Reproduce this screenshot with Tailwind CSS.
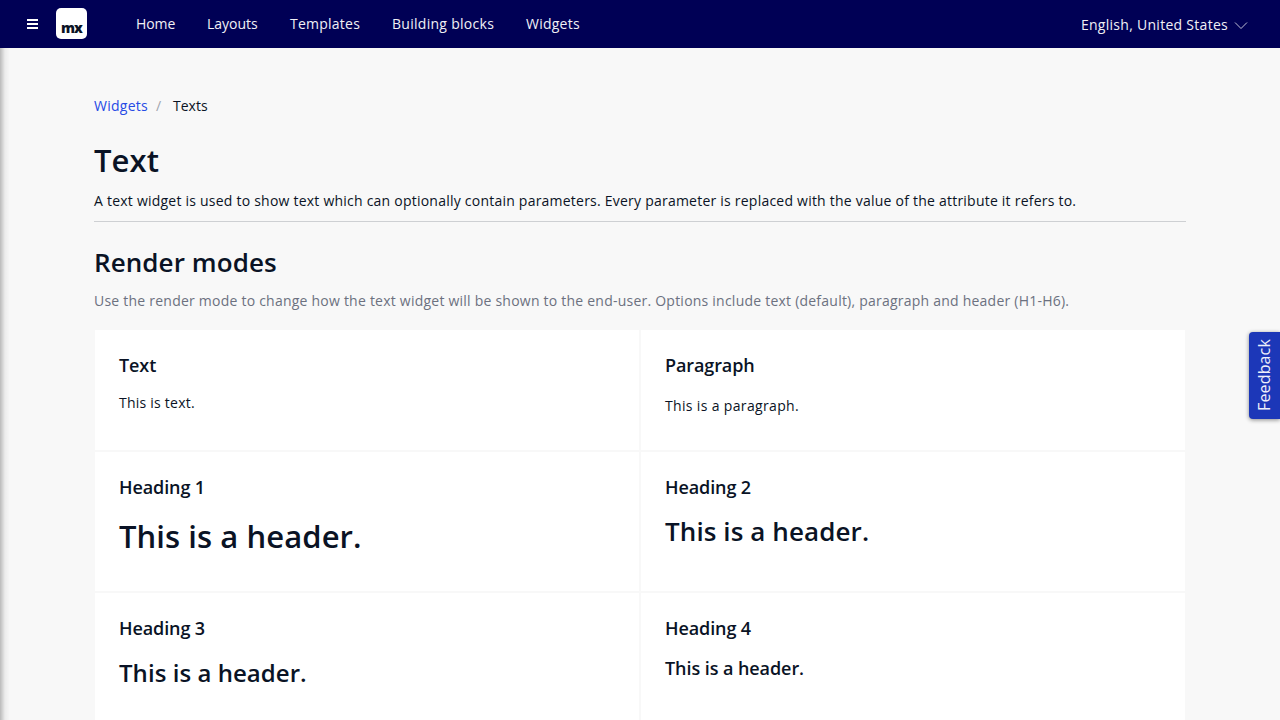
<!DOCTYPE html>
<html lang="en"><head><meta charset="utf-8"><title>Texts</title>
<script src="https://cdn.jsdelivr.net/npm/@tailwindcss/browser@4"></script></head>
<body class="relative h-[720px] overflow-hidden bg-[#f8f8f8] font-['Open_Sans',sans-serif] text-sm leading-5 text-[#0a1325]">
<header class="relative z-10 flex h-12 items-center bg-[#000055] text-[#f0f0f5]">
<svg class="ml-[27px] h-[10px] w-[11px]" viewBox="0 0 11 10" fill="#fff" shape-rendering="crispEdges"><path d="M0 0h11v2H0zM0 4h11v2H0zM0 8h11v2H0z"/></svg>
<div class="mb-px ml-[18px] flex h-[31px] w-[31px] items-end justify-center rounded-[5px] bg-white pb-px text-[14px] leading-5 font-extrabold tracking-[-0.9px] text-[#0a1325]">mx</div>
<nav class="ml-[49px] flex gap-8"><a class="w-[39px] whitespace-nowrap tracking-[-0.1px]">Home</a><a class="w-[51px] whitespace-nowrap">Layouts</a><a class="w-[70px] whitespace-nowrap tracking-[0.24px]">Templates</a><a class="w-[102px] whitespace-nowrap tracking-[0.28px]">Building blocks</a><a class="w-[54px] whitespace-nowrap tracking-[0.24px]">Widgets</a></nav>
<div class="mt-0.5 mr-8 ml-auto flex items-center gap-1.5 tracking-[0.28px]">English, United States<svg class="h-3.5 w-3.5" viewBox="0 0 14 14" fill="none" stroke="#d4d4e2" stroke-width=".9"><path d="M1 4.5l6 6 6-6"/></svg></div>
</header>
<div class="absolute top-12 bottom-0 left-0 w-2.5 bg-linear-to-r from-black/25 via-black/5 to-transparent"></div>
<main class="mx-[94px] pt-12">
<div class="flex tracking-[0.25px]"><a class="w-[54px] text-[#264ae5]">Widgets</a><span class="ml-2 w-[5px] text-[#a0a4ae]">/</span><span class="ml-3 tracking-normal">Texts</span></div>
<h1 class="mt-[23px] text-[31px] leading-[42px] font-semibold tracking-[0.1px]">Text</h1>
<p class="mt-[10px] border-b border-[#ced0d3] pb-[10px] whitespace-nowrap tracking-[0.226px]">A text widget is used to show text which can optionally contain parameters. Every parameter is replaced with the value of the attribute it refers to.</p>
<h2 class="mt-[22px] text-[26px] leading-9 font-semibold tracking-[0.08px]">Render modes</h2>
<p class="mt-[11px] whitespace-nowrap tracking-[0.228px] text-[#6c7180]">Use the render mode to change how the text widget will be shown to the end-user. Options include text (default), paragraph and header (H1-H6).</p>
<section class="mx-px mt-[19px] grid grid-cols-2 grid-rows-[120px_139px_140px] gap-0.5 [&>div]:bg-white [&>div]:px-6 [&>div]:pt-[23px] [&_h5]:text-[18px] [&_h5]:leading-6 [&_h5]:font-semibold [&_h5]:tracking-[-0.1px]">
<div><h5>Text</h5><p class="mt-4 tracking-[0.23px]">This is text.</p></div>
<div><h5>Paragraph</h5><p class="mt-[19px] tracking-[0.34px]">This is a paragraph.</p></div>
<div><h5>Heading 1</h5><h1 class="mt-4 text-[31px] leading-[42px] font-semibold tracking-[0.07px]">This is a header.</h1></div>
<div><h5>Heading 2</h5><h2 class="mt-[14px] text-[26px] leading-9 font-semibold tracking-[0.1px]">This is a header.</h2></div>
<div><h5>Heading 3</h5><h3 class="mt-4 text-[24px] leading-[34px] font-semibold tracking-[0.05px]">This is a header.</h3></div>
<div><h5>Heading 4</h5><h4 class="mt-4 text-[18px] leading-6 font-semibold tracking-[-0.07px]">This is a header.</h4></div>
</section>
</main>
<button class="absolute top-[332px] right-0 flex h-[87px] w-[31px] items-center justify-center rounded-l bg-[#1c37b8] pr-px pb-px text-base text-[#eef0fa] shadow-[0_1px_4px_rgba(0,0,0,0.45)]"><span class="-rotate-90 tracking-[0.15px]">Feedback</span></button>
</body></html>
